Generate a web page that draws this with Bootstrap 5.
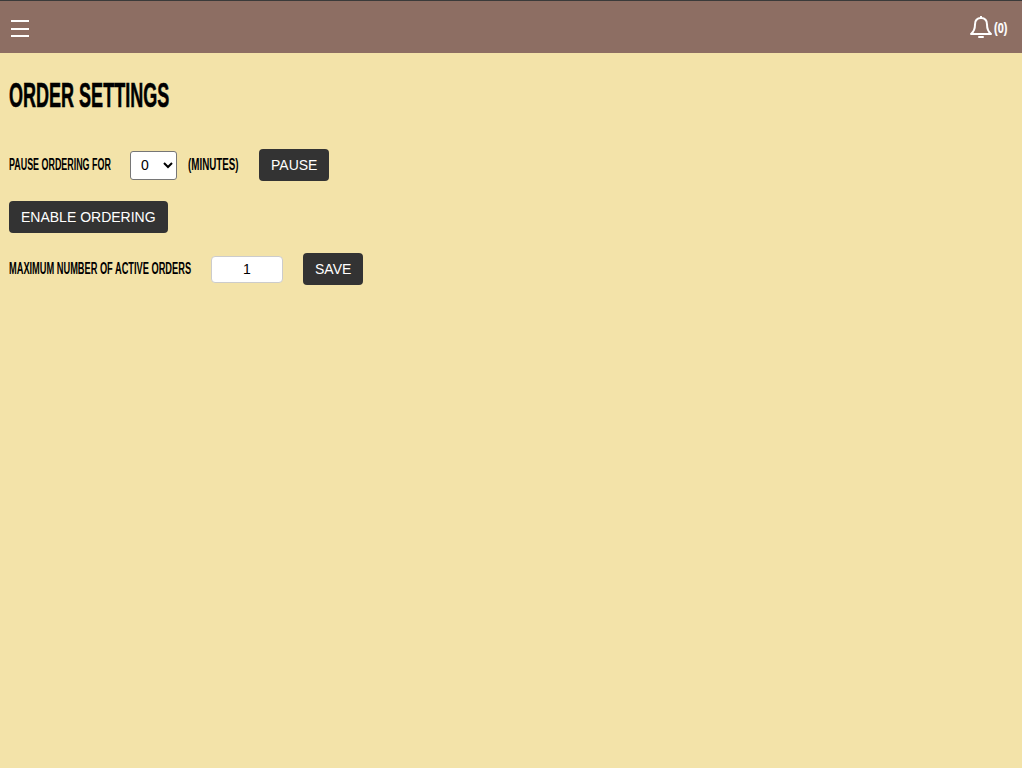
<!DOCTYPE html>
<html lang="en"><head><meta charset="utf-8"><title>Order Settings</title>
<link href="https://cdn.jsdelivr.net/npm/bootstrap@5.3.0/dist/css/bootstrap.min.css" rel="stylesheet">
<style>
html,body{height:100%}
body{background:#f3e3a9;color:#000;font-family:"Liberation Sans",Arial,sans-serif}
.top-strip{height:53px;background:#8d6e63;border-top:1px solid #3a3a3a;padding:0 14px 0 11px}
.burger{width:18px;display:flex;flex-direction:column;gap:5.5px;margin-top:3px}
.burger i{display:block;height:2px;background:#fff}
.bell-icon{margin-right:2px}
.bell-count{display:inline-block;font-weight:700;font-size:14px;color:#fff;margin-top:3px;width:14px;white-space:nowrap;transform:scaleX(.78);transform-origin:left center;-webkit-text-stroke:.2px #fff}
.page-body{padding:0 9px}
.page-title{font-weight:700;font-size:35px;line-height:40px;margin:22px 0 0;text-transform:uppercase;white-space:nowrap}
.squeeze{display:inline-block;transform-origin:left center;white-space:nowrap}
.page-title .squeeze{transform:scaleX(.515);-webkit-text-stroke:.6px #000}
.set-row{height:32px;margin-top:20px}
.first-row{margin-top:34px}
.set-label{font-weight:700;font-size:16px;text-transform:uppercase;white-space:nowrap;margin:0}
.pause-label{width:121px}
.pause-label .squeeze{transform:scaleX(.557)}
.max-label{width:202px}
.max-label .squeeze{transform:scaleX(.578)}
.min-select{width:47px;height:29px;font-size:14px;font-family:"Liberation Sans",sans-serif;background:#fff;border:1px solid #767676;border-radius:3px;color:#000;padding-left:6px}
.min-label{margin-left:11px;width:71px}
.min-label .squeeze{transform:scaleX(.612)}
.count-input{width:72px;height:27px;border:1px solid #ccc;border-radius:4px;background:#fff;text-align:center;font-size:14px;color:#000;padding:0;margin-right:20px}
.dark-btn{background:#333;color:#fff;border:0;border-radius:4px;height:32px;padding:0 12px;font-size:14px;font-family:"Liberation Sans",sans-serif;text-transform:uppercase;line-height:32px}
</style></head><body>
<header class="top-strip d-flex align-items-center justify-content-between">
<div class="burger"><i></i><i></i><i></i></div>
<div class="d-flex align-items-center">
<svg class="bell-icon" width="22" height="24" viewBox="0 0 22 24" fill="none" stroke="#fff" stroke-width="2" stroke-linejoin="round"><path d="M11 1v2"/><path d="M11 3c-4 0-6 2.500-6 6.500 0 4.500-1.500 7.500-4 9.500h20c-2.500-2-4-5-4-9.500 0-4-2-6.500-6-6.500z"/><path d="M9 22h4" stroke-linecap="round"/></svg>
<span class="bell-count">(0)</span>
</div>
</header>
<main class="page-body">
<h1 class="page-title"><span class="squeeze">Order Settings</span></h1>
<div class="set-row first-row d-flex align-items-center">
<label class="set-label pause-label" for="m"><span class="squeeze">Pause ordering for</span></label>
<select id="m" class="min-select"><option>0</option></select>
<span class="set-label min-label"><span class="squeeze">(Minutes)</span></span>
<button class="dark-btn">Pause</button>
</div>
<div class="set-row d-flex align-items-center"><button class="dark-btn">Enable ordering</button></div>
<div class="set-row d-flex align-items-center">
<label class="set-label max-label" for="c"><span class="squeeze">Maximum number of active orders</span></label>
<input id="c" class="count-input" value="1">
<button class="dark-btn">Save</button>
</div>
</main>
<script src="https://cdn.jsdelivr.net/npm/bootstrap@5.3.0/dist/js/bootstrap.bundle.min.js"></script>
</body></html>
